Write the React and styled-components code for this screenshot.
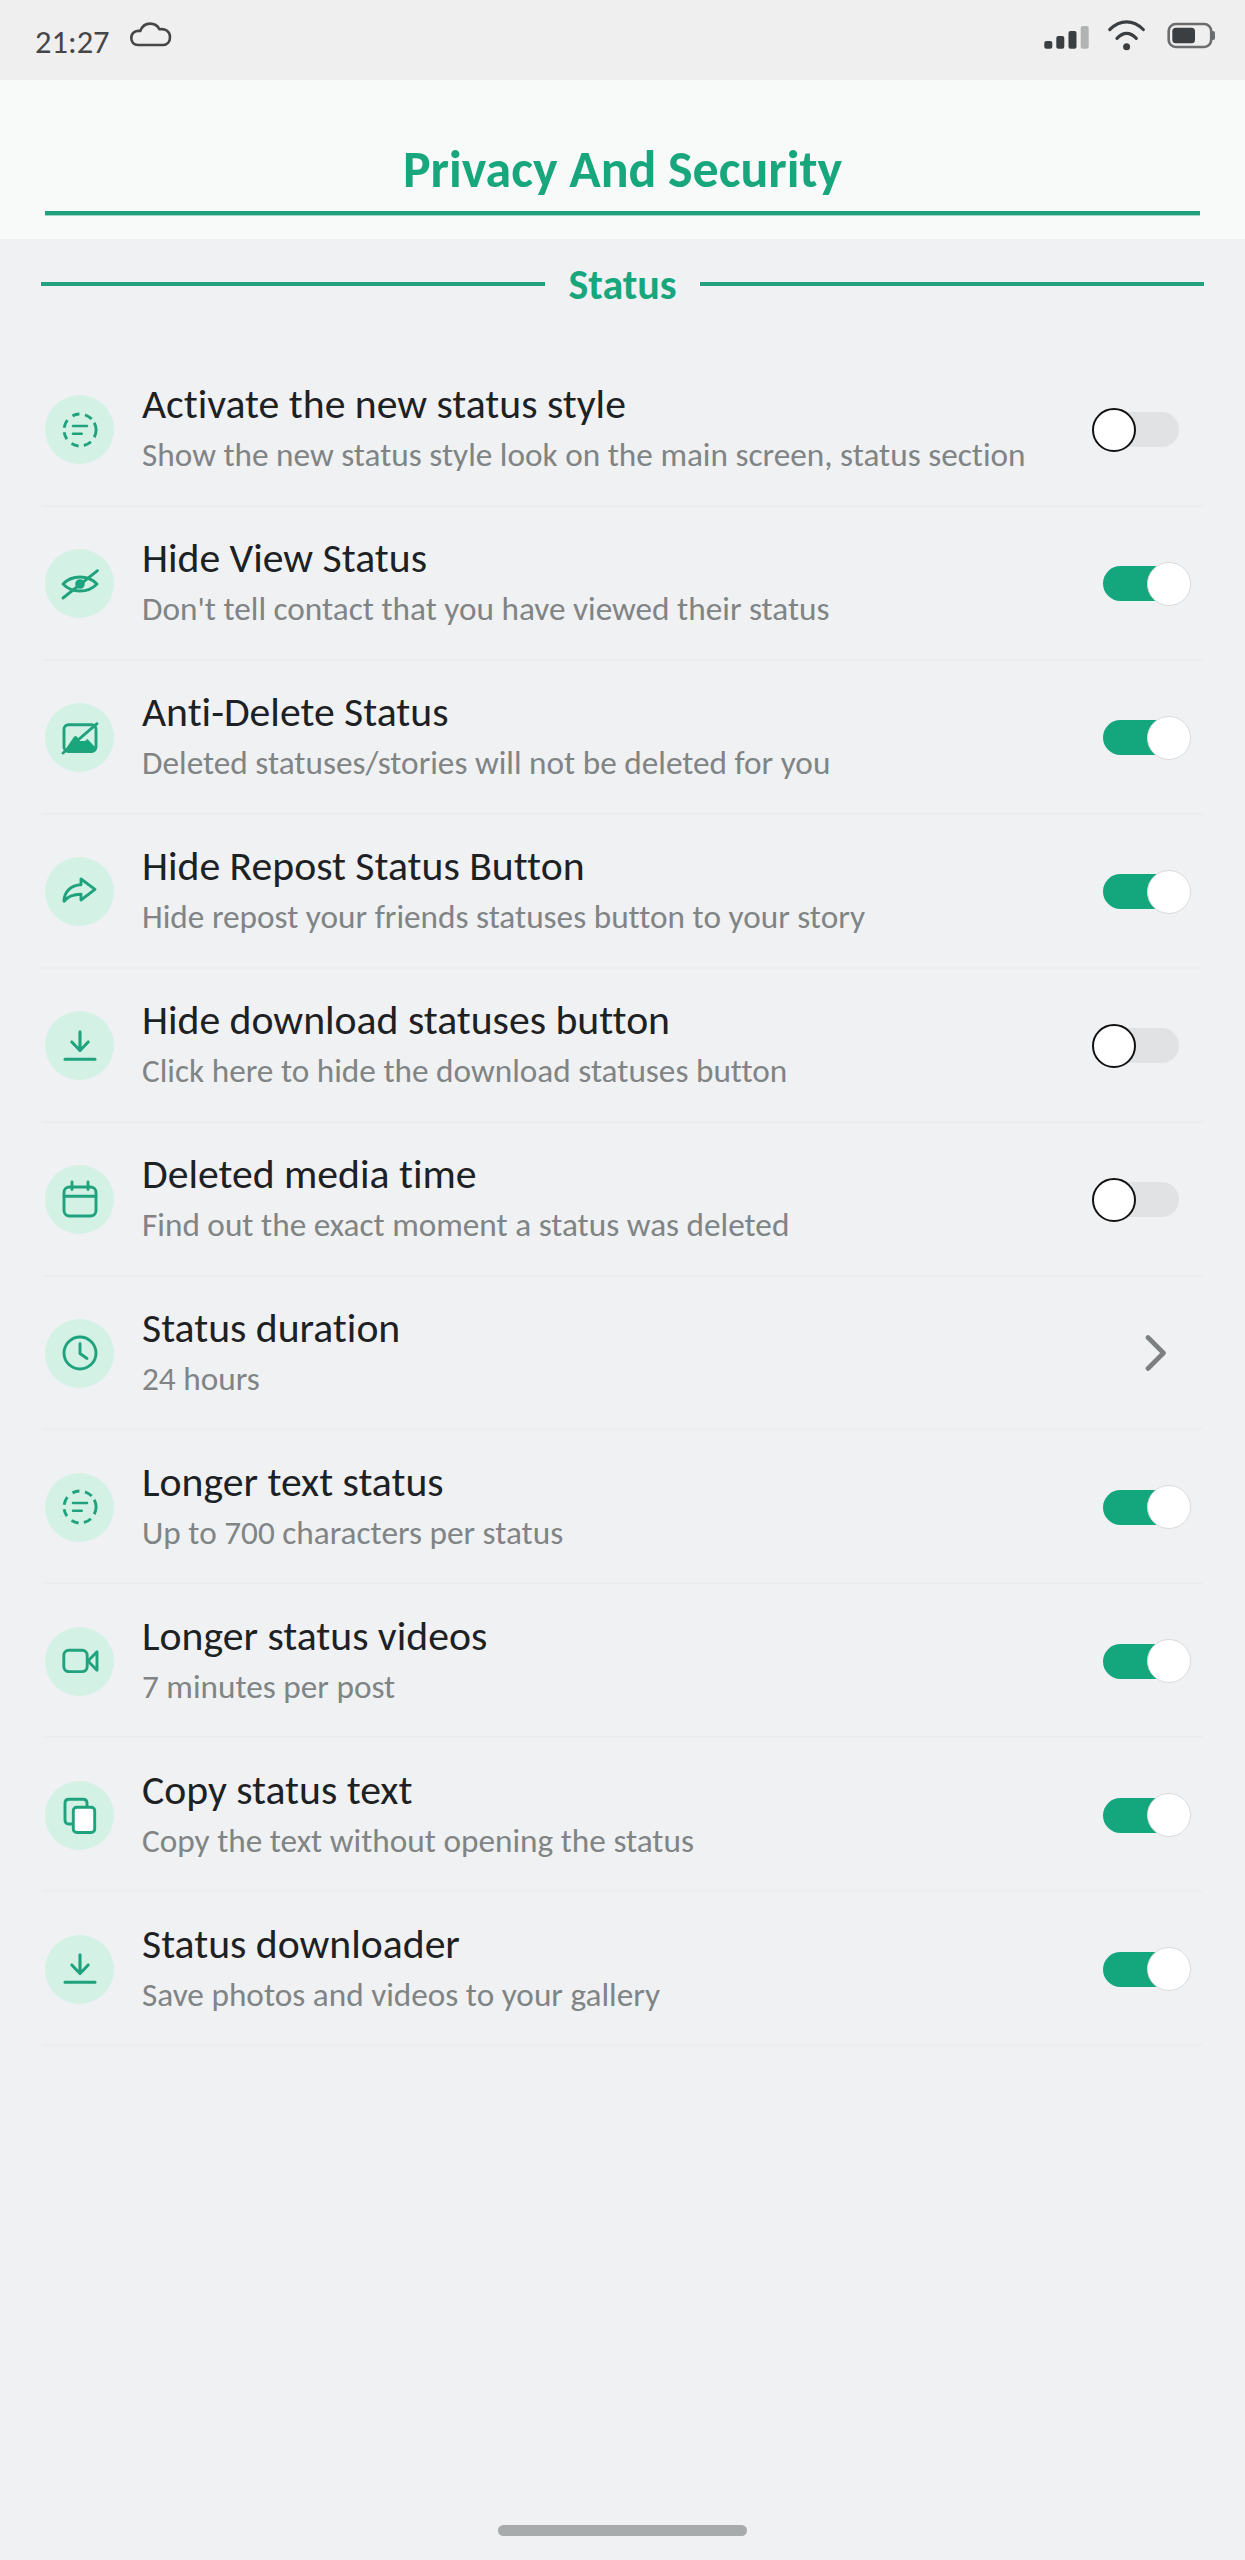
import React, { useState } from 'react';
import styled, { createGlobalStyle } from 'styled-components';

const GlobalStyle = createGlobalStyle`
  * {
    box-sizing: border-box;
  }
  body {
    margin: 0;
    background: #eff1f3;
    font-family: Carlito, Lato, "Liberation Sans", sans-serif;
    font-variant-ligatures: none;
  }
`;

const Screen = styled.div`
  display: flex;
  flex-direction: column;
  width: 1245px;
  height: 2560px;
  background: #eff1f3;
`;

const StatusBar = styled.div`
  display: flex;
  align-items: flex-start;
  height: 80px;
  padding: 18px 28px 0 35px;
  background: #efefef;
`;

const Time = styled.span`
  width: 92px;
  margin-top: 6px;
  font-size: 32.5px;
  line-height: 36px;
  color: #444648;
`;

const Indicators = styled.div`
  display: flex;
  gap: 14px;
  margin-left: auto;
`;

const Header = styled.header`
  height: 159px;
  padding: 60px 45px 0;
  background: #f8f9f9;
`;

const PageTitle = styled.h1`
  height: 75px;
  margin: 0;
  border-bottom: 4px solid #23a07d;
  box-shadow: 0 1px 0 #9ad9c6;
  text-align: center;
  font-size: 51.9px;
  font-weight: 700;
  line-height: 59px;
  color: #18a67d;
`;

const SectionHeading = styled.div`
  display: flex;
  align-items: center;
  height: 90px;
  padding: 0 41px;
`;

const Line = styled.div`
  flex: 1;
  height: 4px;
  background: #23a07d;
`;

const SectionTitle = styled.h2`
  width: 155px;
  margin: 0;
  padding-top: 2px;
  text-align: center;
  font-size: 42px;
  line-height: 44px;
  color: #18a67d;
`;

const List = styled.div`
  margin-top: 24px;
  padding: 0 42px;
`;

const Row = styled.div`
  display: flex;
  align-items: center;
  height: 153.93px;
  padding: 2px 24px 0 3px;
  border-bottom: 2px solid #eceeee;
`;

const IconCircle = styled.div`
  display: flex;
  align-items: center;
  justify-content: center;
  flex: none;
  width: 69px;
  height: 69px;
  margin-right: 28px;
  border-radius: 50%;
  background: #d4f1e6;
`;

const Text = styled.div`
  flex: 1;
  padding-bottom: 1px;
  white-space: nowrap;
`;

const Title = styled.div`
  font-size: 41.7px;
  line-height: 52px;
  color: #1d2123;
`;

const Subtitle = styled.div`
  font-size: 33.25px;
  line-height: 50px;
  color: #808485;
`;

const Track = styled.button`
  position: relative;
  flex: none;
  width: 76px;
  height: 35px;
  padding: 0;
  border: 0;
  border-radius: 18px;
  background: ${props => (props.$on ? '#14a67c' : '#e1e2e4')};
  cursor: pointer;
`;

const Knob = styled.span`
  position: absolute;
  top: -4.5px;
  left: ${props => (props.$on ? '44px' : '-11px')};
  width: 44px;
  height: 44px;
  border: ${props => (props.$on ? '1.5px solid #d9dbdc' : '2px solid #111')};
  border-radius: 50%;
  background: #fff;
`;

const Chevron = styled.svg`
  flex: none;
  width: 24px;
  height: 40px;
  margin-right: 10px;
`;

const NavBar = styled.div`
  display: flex;
  justify-content: center;
  margin-top: auto;
  height: 35px;
`;

const NavPill = styled.div`
  width: 249px;
  height: 11px;
  border-radius: 6px;
  background: #a8abac;
`;

// all glyphs are drawn around 0,0
const glyphs = {
  status: (
    <>
      {[[-27, 27], [47, 76], [95, 122], [145, 172], [188, 218], [242, 268], [288, 317]].map(([a, b]) => {
        const p = deg => `${(16 * Math.cos(deg * Math.PI / 180)).toFixed(2)} ${(16 * Math.sin(deg * Math.PI / 180)).toFixed(2)}`;
        return <path key={a} strokeLinecap="butt" d={`M${p(a)}A16 16 0 0 1 ${p(b)}`} />;
      })}
      <path d="M-7 -4H7M-7 3.8H1.7" strokeWidth="2.6" />
    </>
  ),
  eye: (
    <>
      <path d="M-17 0C-8 -9.4 8 -9.4 17 0C8 9.4 -8 9.4 -17 0Z" />
      <circle r="4.8" fill="#18a67d" stroke="none" />
      <path d="M-17 14L17.5 -13.3" />
    </>
  ),
  image: (
    <>
      <rect x="-16" y="-13.3" width="32" height="26.8" rx="4.5" />
      <path d="M-15 12L-6 -1.2Q-4.5 -2.6 -3 -1.2L0 3L5 3L7.5 1L15 9V12Z" fill="#18a67d" stroke="none" />
      <path d="M-17 15L17 -14.3" />
    </>
  ),
  share: <path d="M15 -2.7L1 -13V-7.3C-9 -7 -16 0 -16 9.3C-12 4 -6 2.3 1 2.3V8Z" />,
  download: <path d="M0 -14.3V4.5M-8.2 -4L0 4.5L8.2 -4M-15 13.3H15" strokeWidth="3.1" />,
  calendar: (
    <>
      <rect x="-16" y="-13" width="32" height="29" rx="5.5" />
      <path d="M-16 -3.7H16M-8 -18V-10.5M8 -18V-10.5" />
    </>
  ),
  clock: (
    <>
      <circle r="16" />
      <path d="M0 -9.3V0.5L7 5.5" />
    </>
  ),
  video: (
    <>
      <rect x="-16.2" y="-10.8" width="23.4" height="21.4" rx="5" />
      <path d="M8 0L17 -9.3V9.3Z" />
    </>
  ),
  copy: (
    <>
      <path d="M-7 9H-11Q-15 9 -15 5V-11.7Q-15 -15.7 -11 -15.7H3Q7 -15.7 7 -11.7V-8" />
      <rect x="-6.7" y="-7.8" width="21.4" height="25.3" rx="3.5" fill="#fff" />
    </>
  ),
};

const Glyph = ({ name }) => (
  <svg width="44" height="44" viewBox="-22 -22 44 44" fill="none" stroke="#20a37c" strokeWidth="2.9" strokeLinecap="round" strokeLinejoin="round">
    {glyphs[name]}
  </svg>
);

const settings = [
  { icon: 'status', title: 'Activate the new status style', subtitle: 'Show the new status style look on the main screen, status section', on: false },
  { icon: 'eye', title: 'Hide View Status', subtitle: "Don't tell contact that you have viewed their status", on: true },
  { icon: 'image', title: 'Anti-Delete Status', subtitle: 'Deleted statuses/stories will not be deleted for you', on: true },
  { icon: 'share', title: 'Hide Repost Status Button', subtitle: 'Hide repost your friends statuses button to your story', on: true },
  { icon: 'download', title: 'Hide download statuses button', subtitle: 'Click here to hide the download statuses button', on: false },
  { icon: 'calendar', title: 'Deleted media time', subtitle: 'Find out the exact moment a status was deleted', on: false },
  { icon: 'clock', title: 'Status duration', subtitle: '24 hours', link: true },
  { icon: 'status', title: 'Longer text status', subtitle: 'Up to 700 characters per status', on: true },
  { icon: 'video', title: 'Longer status videos', subtitle: '7 minutes per post', on: true },
  { icon: 'copy', title: 'Copy status text', subtitle: 'Copy the text without opening the status', on: true },
  { icon: 'download', title: 'Status downloader', subtitle: 'Save photos and videos to your gallery', on: true },
];

const Setting = ({ item }) => {
  const [on, setOn] = useState(item.on);

  return (
    <Row>
      <IconCircle><Glyph name={item.icon} /></IconCircle>
      <Text>
        <Title>{item.title}</Title>
        <Subtitle>{item.subtitle}</Subtitle>
      </Text>
      {item.link ? (
        <Chevron viewBox="0 0 24 40" fill="none" stroke="#7d8081" strokeWidth="4.6" strokeLinecap="round" strokeLinejoin="round">
          <path d="M3 4.5L18.5 20L3 35.5" />
        </Chevron>
      ) : (
        <Track $on={on} aria-label={item.title} onClick={() => setOn(!on)}>
          <Knob $on={on} />
        </Track>
      )}
    </Row>
  );
};

const App = () => {
  return (
    <>
      <GlobalStyle />
      <Screen>
        <StatusBar>
          <Time>21:27</Time>
          <svg width="48" height="32" viewBox="127 18 48 32" fill="none" stroke="#444648" strokeWidth="2.6" strokeLinejoin="round">
            <path d="M138 45H163C167.500 45 170 41.500 170 37C170 31.500 165.500 28.300 159.500 29.300C157.500 25.500 154 23.600 150 23.600C145.500 23.600 142 26.300 140.300 31C134.500 30.300 131.300 33.300 131.300 38C131.300 42 134 45 138 45Z" />
          </svg>
          <Indicators>
            <svg width="48" height="34" viewBox="1043 18 48 34" fill="#3c3f41">
              <rect x="1044.300" y="41" width="8" height="7.700" rx="2" />
              <rect x="1056.300" y="36" width="8" height="12.700" rx="2" />
              <rect x="1068.500" y="31" width="8" height="17.700" rx="2" />
              <rect x="1080.700" y="26" width="8" height="22.700" rx="2" fill="#b2b3b3" />
            </svg>
            <svg width="44" height="34" viewBox="1105 18 44 34" fill="none" stroke="#3c3f41" strokeWidth="3.2" strokeLinecap="round">
              <path d="M1109.800 29.500Q1117.500 21.800 1126.600 21.800T1143.300 29.500M1117 38.300Q1126.600 28.300 1136.300 38.300" />
              <circle cx="1126.600" cy="46.800" r="3.500" fill="#3c3f41" stroke="none" />
            </svg>
            <svg width="54" height="34" viewBox="1163 18 54 34">
              <rect x="1168.700" y="24" width="42.500" height="23" rx="7" fill="none" stroke="#6b6d6f" strokeWidth="2.6" />
              <rect x="1172.300" y="27.700" width="22.700" height="15.500" rx="3.500" fill="#3c3f41" />
              <path d="M1212 31H1213Q1215 31 1215 33V38Q1215 40 1213 40H1212Z" fill="#6b6d6f" />
            </svg>
          </Indicators>
        </StatusBar>
        <Header>
          <PageTitle>Privacy And Security</PageTitle>
        </Header>
        <SectionHeading>
          <Line />
          <SectionTitle>Status</SectionTitle>
          <Line />
        </SectionHeading>
        <List>
          {settings.map(item => <Setting key={item.title} item={item} />)}
        </List>
        <NavBar>
          <NavPill />
        </NavBar>
      </Screen>
    </>
  );
};

export default App;
